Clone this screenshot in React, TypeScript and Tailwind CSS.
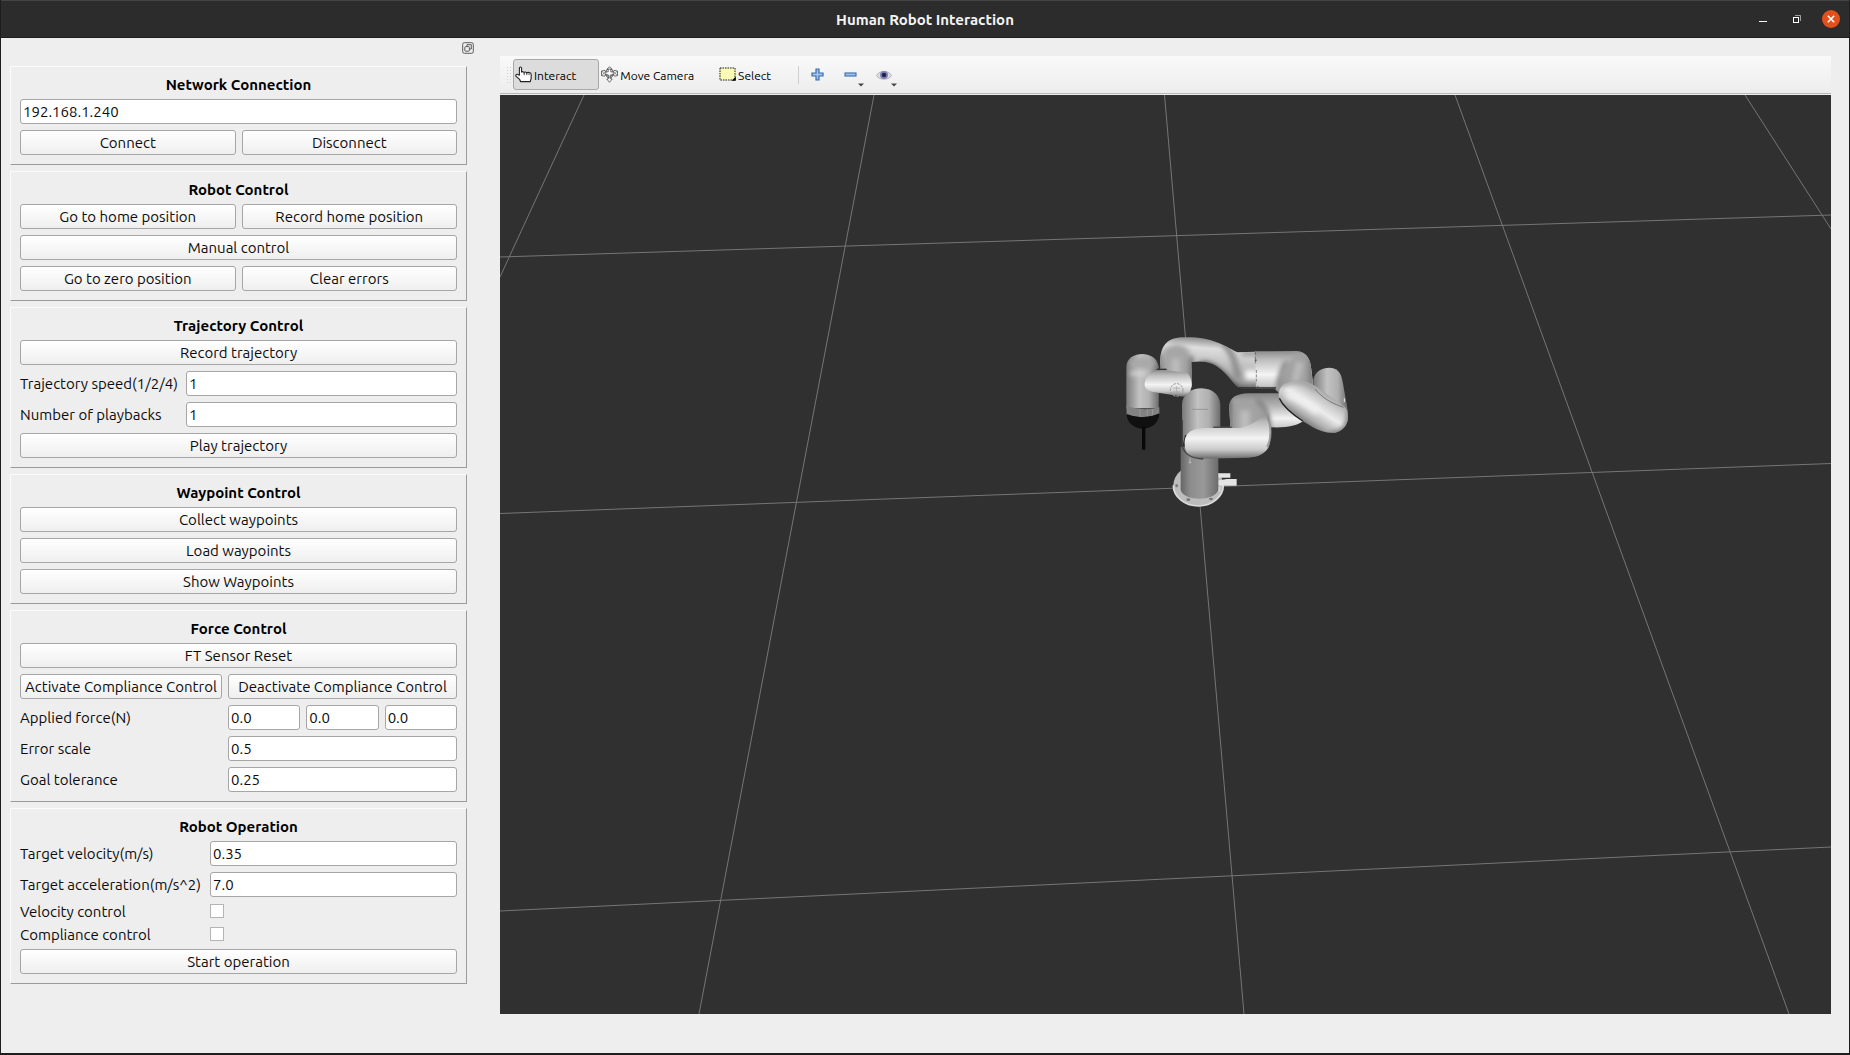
import { useState, type ReactNode } from "react";
import clsx from "clsx";

function Panel({ title, children }: { title: string; children: ReactNode }) {
  return (
    <section className="flex flex-col gap-1.5 border border-t-[#fbfbfb] border-r-[#9b9b9b] border-b-[#9b9b9b] border-l-[#fbfbfb] px-[9px] pt-[9px] pb-[9px]">
      <h2 className="h-[17px] text-center text-[15px] leading-[18px] font-bold text-black">{title}</h2>
      {children}
    </section>
  );
}

function PushButton({ children }: { children: ReactNode }) {
  return (
    <button
      type="button"
      className="h-[25px] w-full rounded-[3px] border border-[#a6a6a6] bg-linear-to-b from-white to-[#efefef] text-center leading-[22px] whitespace-nowrap active:from-[#dcdcdc] active:to-[#dcdcdc]"
    >
      {children}
    </button>
  );
}

function LineEdit({ id, label, initial }: { id: string; label?: string; initial: string }) {
  const [value, setValue] = useState(initial);
  return (
    <input
      id={id}
      type="text"
      aria-label={label}
      value={value}
      onChange={(e) => setValue(e.target.value)}
      className="h-[25px] w-full min-w-0 rounded-[3px] border border-[#a6a6a6] bg-white px-0.5 leading-[22px] outline-none focus:border-[#308cc6]"
    />
  );
}

function CheckRow({ id, label }: { id: string; label: string }) {
  return (
    <>
      <label htmlFor={id} className="h-[17px] leading-[17px]">{label}</label>
      <input
        id={id}
        type="checkbox"
        className="mt-px h-3.5 w-3.5 appearance-none self-start border border-[#b4b4b4] bg-white checked:bg-[#308cc6]"
      />
    </>
  );
}

function ControlDock() {
  return (
    <aside className="w-[475px] shrink-0 pr-[9px] pb-8 pl-[9px] text-[15px] leading-[25px] text-[#0c0c0c]">
      <div className="flex h-7 justify-end pt-1">
        <button type="button" aria-label="Float panel" className="mr-[-7px] h-3 w-3">
          <svg viewBox="0 0 12 12" className="h-3 w-3" fill="none" stroke="#5c5c5c">
            <rect x=".7" y=".7" width="10.6" height="10.6" rx="1.6" />
            <path d="M5 4.5V2.7h4.3V7H7.6" />
            <rect x="2.8" y="4.6" width="4.6" height="4.6" rx=".8" />
          </svg>
        </button>
      </div>

      <div className="flex flex-col gap-1.5">
        <Panel title="Network Connection">
          <LineEdit id="ip" label="Robot IP address" initial="192.168.1.240" />
          <div className="grid grid-cols-2 gap-1.5">
            <PushButton>Connect</PushButton>
            <PushButton>Disconnect</PushButton>
          </div>
        </Panel>

        <Panel title="Robot Control">
          <div className="grid grid-cols-2 gap-1.5">
            <PushButton>Go to home position</PushButton>
            <PushButton>Record home position</PushButton>
          </div>
          <PushButton>Manual control</PushButton>
          <div className="grid grid-cols-2 gap-1.5">
            <PushButton>Go to zero position</PushButton>
            <PushButton>Clear errors</PushButton>
          </div>
        </Panel>

        <Panel title="Trajectory Control">
          <PushButton>Record trajectory</PushButton>
          <div className="grid grid-cols-[160px_1fr] gap-1.5">
            <label htmlFor="speed" className="whitespace-nowrap">Trajectory speed(1/2/4)</label>
            <LineEdit id="speed" initial="1" />
            <label htmlFor="playbacks">Number of playbacks</label>
            <LineEdit id="playbacks" initial="1" />
          </div>
          <PushButton>Play trajectory</PushButton>
        </Panel>

        <Panel title="Waypoint Control">
          <PushButton>Collect waypoints</PushButton>
          <PushButton>Load waypoints</PushButton>
          <PushButton>Show Waypoints</PushButton>
        </Panel>

        <Panel title="Force Control">
          <PushButton>FT Sensor Reset</PushButton>
          <div className="grid grid-cols-[202px_1fr] gap-1.5">
            <PushButton>Activate Compliance Control</PushButton>
            <PushButton>Deactivate Compliance Control</PushButton>
            <label htmlFor="force-x">Applied force(N)</label>
            <div className="grid grid-cols-3 gap-1.5">
              <LineEdit id="force-x" initial="0.0" />
              <LineEdit id="force-y" label="Applied force Y" initial="0.0" />
              <LineEdit id="force-z" label="Applied force Z" initial="0.0" />
            </div>
            <label htmlFor="error-scale">Error scale</label>
            <LineEdit id="error-scale" initial="0.5" />
            <label htmlFor="tolerance">Goal tolerance</label>
            <LineEdit id="tolerance" initial="0.25" />
          </div>
        </Panel>

        <Panel title="Robot Operation">
          <div className="grid grid-cols-[184px_1fr] gap-1.5">
            <label htmlFor="velocity">Target velocity(m/s)</label>
            <LineEdit id="velocity" initial="0.35" />
            <label htmlFor="acceleration" className="whitespace-nowrap">Target acceleration(m/s^2)</label>
            <LineEdit id="acceleration" initial="7.0" />
            <CheckRow id="velocity-control" label="Velocity control" />
            <CheckRow id="compliance-control" label="Compliance control" />
          </div>
          <PushButton>Start operation</PushButton>
        </Panel>
      </div>
    </aside>
  );
}

function HandIcon() {
  return (
    <svg viewBox="0 0 17 17" className="h-[17px] w-[17px] shrink-0" fill="#fff" stroke="#222" strokeWidth="1.1">
      <path d="M4.4 9.6V2.2C4.4.6 6.6.6 6.6 2.2V6.4C6.8 5.4 9 5.4 9.2 6.6 9.6 5.8 11.4 5.8 11.8 7 12.4 6.2 16.2 5.8 16.2 8.6V12.2L15.2 15.6H5.6L4.6 13.4.9 10.2C.4 8.8 2 7.8 3 8.4L4.4 9.6" />
      <path d="M9.2 6.8V9.2M11.8 7.2V9.2M14 7.2V9.2" strokeWidth=".8" />
    </svg>
  );
}

function MoveIcon() {
  return (
    <svg viewBox="0 0 17 17" className="h-[17px] w-[17px] shrink-0" fill="#fafafa" stroke="#4a4a4a" strokeWidth=".8">
      <path d="M8.5.7 11.2 3.4H9.8V5.8H12.6L13 4.4 16.5 5 16.5 9.6 13.4 10.2 12.6 8.8H9.8V13H11.2L8.5 16.3 5.8 13H7.2V8.8H4.4L3.6 10.2.5 9.6.5 5 4 4.4 4.4 5.8H7.2V3.4H5.8Z" />
      <path d="M.6 5 4.4 8.8M.6 9.6 4.4 5.8M16.4 5 12.6 8.8M16.4 9.6 12.6 5.8" fill="none" strokeWidth=".6" />
      <ellipse cx="8.5" cy="7.4" rx="3.8" ry="4.4" fill="none" />
      <path d="M4.8 8.5C6.6 10.6 10.4 10.6 12.2 8.5" fill="none" />
    </svg>
  );
}

function SelectIcon() {
  return (
    <svg viewBox="0 0 17 17" className="h-[17px] w-[17px] shrink-0">
      <rect x="1" y="2" width="15" height="12" fill="#fcfbb5" stroke="#222" strokeDasharray="1.6 .9" />
      <path d="M16.8 10.4V14.8H12.6Z" fill="#000" />
    </svg>
  );
}

function DropArrow() {
  return (
    <svg viewBox="0 0 6 4" className="absolute right-0 bottom-[3px] h-1 w-1.5">
      <path d="M0 .5H6L3 3.5Z" fill="#444" />
    </svg>
  );
}

const tools = [
  { name: "Interact", icon: <HandIcon /> },
  { name: "Move Camera", icon: <MoveIcon /> },
  { name: "Select", icon: <SelectIcon /> },
];

function Toolbar() {
  const [active, setActive] = useState("Interact");
  return (
    <div role="toolbar" className="mb-px flex h-[38px] items-center border-b border-[#b8b8b8] bg-linear-to-b from-[#f9f9f9] to-[#ededed] pl-[5px]">
      <svg viewBox="0 0 6 16" className="h-4 w-2" stroke="#cfcfcf" strokeDasharray="1 2">
        <path d="M1.5 0V16M4.5 0V16" />
      </svg>
      {tools.map((t) => (
        <button
          key={t.name}
          type="button"
          aria-pressed={active === t.name}
          onClick={() => setActive(t.name)}
          className={clsx(
            "flex h-[31px] items-center gap-0.5 rounded-[3px] border pr-[22px] pl-px text-[12px] leading-4 text-black",
            active === t.name ? "border-[#a8a8a8] bg-[#dcdcdc]" : "border-transparent",
          )}
        >
          {t.icon}
          <span className="pt-0.5 whitespace-nowrap">{t.name}</span>
        </button>
      ))}
      <div className="ml-1 h-[18px] w-px bg-[#cfcfcf]" />
      <button type="button" aria-label="Add tool" className="ml-3 flex h-[31px] w-[13px] items-center">
        <svg viewBox="0 0 13 13" className="h-[13px] w-[13px]">
          <path d="M5 1H8V5H12V8H8V12H5V8H1V5H5Z" fill="#9fc3ea" stroke="#3a6cab" strokeWidth="1.2" />
        </svg>
      </button>
      <button type="button" aria-label="Remove tool" className="relative ml-5 flex h-[31px] w-5 items-center">
        <svg viewBox="0 0 13 13" className="h-[13px] w-[13px]">
          <rect x="1" y="5" width="11" height="3" fill="#9fc3ea" stroke="#3a6cab" strokeWidth="1.1" />
        </svg>
        <DropArrow />
      </button>
      <button type="button" aria-label="View options" className="relative ml-3 flex h-[31px] w-[21px] items-center">
        <svg viewBox="0 0 16 12" className="h-3 w-4">
          <path d="M.5 6.5C3 1 13 1 15.5 6.5 13 11.5 3 11.5.5 6.5Z" fill="#dcdce2" stroke="#a9a9b0" strokeWidth=".8" />
          <circle cx="8" cy="6" r="4" fill="#8183b4" />
          <circle cx="8" cy="6" r="2.3" fill="#23234f" />
        </svg>
        <DropArrow />
      </button>
    </div>
  );
}

// xArm in its rest pose, painted back to front
function RobotArm() {
  return (
    <g transform="translate(600 225) scale(.33333)">
      <defs>
        <linearGradient id="column">
          <stop offset="0" stopColor="#666" />
          <stop offset=".25" stopColor="#8c8c8c" />
          <stop offset=".6" stopColor="#999" />
          <stop offset="1" stopColor="#6c6c6c" />
        </linearGradient>
        <linearGradient id="upright">
          <stop offset="0" stopColor="#7a7a7a" />
          <stop offset=".4" stopColor="#c2c2c2" />
          <stop offset=".7" stopColor="#b0b0b0" />
          <stop offset="1" stopColor="#6c6c6c" />
        </linearGradient>
        <linearGradient id="barrel" x2="0" y2="1">
          <stop offset="0" stopColor="#8c8c8c" />
          <stop offset=".2" stopColor="#bdbdbd" />
          <stop offset=".55" stopColor="#f4f4f4" />
          <stop offset=".8" stopColor="#cacaca" />
          <stop offset="1" stopColor="#6c6c6c" />
        </linearGradient>
        {/* runs across the forearm, which points down and right */}
        <linearGradient id="forearm" gradientUnits="userSpaceOnUse" x1="690" y1="215" x2="620" y2="322">
          <stop offset="0" stopColor="#9a9a9a" />
          <stop offset=".25" stopColor="#c8c8c8" />
          <stop offset=".5" stopColor="#ececec" />
          <stop offset=".78" stopColor="#b0b0b0" />
          <stop offset="1" stopColor="#666" />
        </linearGradient>
        <linearGradient id="arch" x1=".3" y1="0" x2=".15" y2="1">
          <stop offset="0" stopColor="#8e8e8e" />
          <stop offset=".18" stopColor="#dedede" />
          <stop offset=".45" stopColor="#c2c2c2" />
          <stop offset="1" stopColor="#808080" />
        </linearGradient>
        <linearGradient id="lowerBend" x2="0" y2="1">
          <stop offset="0" stopColor="#858585" />
          <stop offset=".3" stopColor="#b4b4b4" />
          <stop offset=".6" stopColor="#f2f2f2" />
          <stop offset="1" stopColor="#a8a8a8" />
        </linearGradient>
        <filter id="soft" filterUnits="userSpaceOnUse" x="0" y="0" width="810" height="600">
          <feGaussianBlur stdDeviation="8" />
        </filter>
        <clipPath id="archClip">
          <path d="M181 140C177 80 200 54 245 52C330 48 365 72 412 97L470 95V207H425C400 198 390 165 350 138C325 122 300 124 274 126L276 200H180Z" />
        </clipPath>
        <clipPath id="elbowClip">
          <path d="M465 94 590 93C620 95 632 118 634 150L640 200 540 222 525 207H468Z" />
        </clipPath>
        <clipPath id="lowerClip">
          <path d="M388 262C388 232 410 221 445 220H545L608 304C590 318 560 324 512 322V345H392Z" />
        </clipPath>
        <clipPath id="forearmClip">
          <path d="M536 225C535 195 565 182 600 184C640 186 655 205 735 262C752 280 748 330 705 338C660 342 620 310 590 290C560 270 538 250 536 225Z" />
        </clipPath>
        <clipPath id="wristClip">
          <path d="M79 145C78 112 105 102 128 102C160 104 176 120 177 150L176 265H79Z" />
        </clipPath>
      </defs>

      {/* base flange and cable ports */}
      <ellipse cx="295" cy="496" rx="75" ry="62" fill="#bdbdbd" />
      <path d="M220 496A75 62 0 0 0 370 496" fill="none" stroke="#dcdcdc" strokeWidth="5" />
      <path d="M354 460H391V473H354ZM350 482 380 477H410V497H362L350 492Z" fill="#e4e4e4" />
      <path d="M345 500H362V515H345Z" fill="#d2d2d2" />
      <path d="M242 380H355V510C345 545 250 545 242 510Z" fill="url(#column)" />
      <g fill="#777">
        <ellipse cx="230" cy="497" rx="4" ry="5" />
        <ellipse cx="265" cy="539" rx="6" ry="4" />
        <ellipse cx="333" cy="537" rx="6" ry="4" />
      </g>
      <path d="M270 415V431M266 427H274" stroke="#ccc" strokeWidth="2" />

      {/* far link on the right */}
      <path d="M640 190C638 160 660 143 690 143C718 145 724 165 728 185L744 275 700 275 645 220Z" fill="url(#upright)" />

      {/* lower bend */}
      <path d="M388 262C388 232 410 221 445 220H545L608 304C590 318 560 324 512 322V345H392Z" fill="url(#lowerBend)" />
      <g clipPath="url(#lowerClip)">
        <path d="M384 240H455C490 245 505 270 508 350H384Z" fill="#a2a2a2" filter="url(#soft)" />
        <path d="M420 270H450V350H420Z" fill="#bcbcbc" filter="url(#soft)" />
        <path d="M470 240C500 260 505 290 506 330" stroke="#808080" strokeWidth="14" fill="none" filter="url(#soft)" />
        <path d="M380 240H392V345H380Z" fill="#4d4d4d" filter="url(#soft)" />
      </g>

      {/* arch from the wrist to the elbow */}
      <path d="M181 140C177 80 200 54 245 52C330 48 365 72 412 97L470 95V207H425C400 198 390 165 350 138C325 122 300 124 274 126L276 200H180Z" fill="url(#arch)" />
      <g clipPath="url(#archClip)">
        <path d="M190 90C210 72 250 62 268 95 276 120 276 160 276 205H190Z" fill="#a6a6a6" filter="url(#soft)" />
        <path d="M215 115H240V180H215Z" fill="#bcbcbc" filter="url(#soft)" />
        <path d="M181 100V200" stroke="#5c5c5c" strokeWidth="8" filter="url(#soft)" />
        <path d="M274 110V200" stroke="#606060" strokeWidth="10" filter="url(#soft)" />
        <path d="M300 134C360 124 385 204 430 216" stroke="#444" strokeWidth="18" fill="none" filter="url(#soft)" />
        <path d="M370 72C400 95 405 130 415 175" stroke="#8a8a8a" strokeWidth="18" fill="none" filter="url(#soft)" />
        <path d="M435 165H490" stroke="#f8f8f8" strokeWidth="30" filter="url(#soft)" />
        <path d="M425 100H480" stroke="#8a8a8a" strokeWidth="12" filter="url(#soft)" />
        <path d="M420 207H480" stroke="#555" strokeWidth="12" filter="url(#soft)" />
      </g>

      {/* elbow */}
      <path d="M465 94 590 93C620 95 632 118 634 150L640 200 540 222 525 207H468Z" fill="url(#barrel)" />
      <g clipPath="url(#elbowClip)">
        <path d="M590 100C560 125 542 160 532 215H650V100Z" fill="#a0a0a0" filter="url(#soft)" />
        <path d="M560 125C545 145 538 175 534 205" stroke="#787878" strokeWidth="12" fill="none" filter="url(#soft)" />
        <path d="M600 125 585 185" stroke="#bababa" strokeWidth="24" filter="url(#soft)" />
        <path d="M634 110V200" stroke="#5e5e5e" strokeWidth="8" filter="url(#soft)" />
      </g>
      <path d="M416 204H528" stroke="#2b2b2b" strokeWidth="5" />
      <path d="M466 96V130M469 150V190M470 198 484 206" stroke="#555" strokeWidth="2" strokeDasharray="9 4" />
      <circle cx="467" cy="121" r="3" fill="#555" />

      {/* forearm */}
      <path d="M536 225C535 195 565 182 600 184C640 186 655 205 735 262C752 280 748 330 705 338C660 342 620 310 590 290C560 270 538 250 536 225Z" fill="url(#forearm)" />
      <g clipPath="url(#forearmClip)">
        <path d="M540 200C570 170 620 180 650 205" stroke="#a4a4a4" strokeWidth="20" fill="none" filter="url(#soft)" />
        <path d="M560 222C590 232 620 250 655 275" stroke="#f0f0f0" strokeWidth="22" fill="none" filter="url(#soft)" />
        <path d="M748 270C752 310 730 345 690 342" stroke="#707070" strokeWidth="14" fill="none" filter="url(#soft)" />
      </g>
      <path d="M538 235C550 262 580 285 608 303" stroke="#1c1c1c" strokeWidth="4" fill="none" />
      <path d="M645 208C680 245 700 250 730 262" stroke="#555" strokeWidth="2" fill="none" />
      <path d="M733 235V246" stroke="#eee" strokeWidth="3" />

      {/* shoulder: upright, then the horizontal barrel */}
      <path d="M246 255C246 222 275 205 305 205C338 206 360 225 361 255V345H255L247 380Z" fill="url(#upright)" />
      <path d="M277 268H325" stroke="#858585" strokeWidth="2" />
      <path d="M340 322H395" stroke="#4c4c4c" strokeWidth="5" />
      <path d="M254 370C254 335 280 324 320 324H420C450 320 490 290 505 280C515 310 515 350 508 375C500 400 475 412 445 413L300 416C268 414 254 400 254 370Z" fill="url(#barrel)" />
      <path d="M503 290C514 320 514 355 502 382" stroke="#888" strokeWidth="7" fill="none" opacity=".7" />
      <path d="M247 300V380C255 405 275 416 310 417" stroke="#444" strokeWidth="4" fill="none" />

      {/* wrist, sensor ring and tool */}
      <path d="M79 145C78 112 105 102 128 102C160 104 176 120 177 150L176 265H79Z" fill="url(#upright)" />
      <g clipPath="url(#wristClip)">
        <ellipse cx="126" cy="130" rx="38" ry="16" fill="#a8a8a8" filter="url(#soft)" />
        <path d="M90 160H140" stroke="#d6d6d6" strokeWidth="12" filter="url(#soft)" />
      </g>
      <path d="M170 148H200" stroke="#333" strokeWidth="4" />
      <path d="M134 188C140 160 160 148 190 150L262 158C282 180 280 220 250 230L160 216C142 212 132 205 134 188Z" fill="url(#barrel)" />
      <circle cx="230" cy="210" r="19" fill="none" stroke="#999" strokeWidth="3" strokeDasharray="8 3" />
      <path d="M219 204H241M219 216H241M230 199V221" stroke="#a4a4a4" strokeWidth="2" />
      <path d="M79 258Q128 275 178 262V282Q128 300 80 284Z" fill="#828282" />
      <path d="M120 268V294M142 268V293M158 267V290" stroke="#999" strokeWidth="3" />
      <path d="M80 282Q128 302 178 280C178 308 155 326 130 326S80 310 80 282Z" fill="#101010" />
      <path d="M131 320V389" stroke="#080808" strokeWidth="10" />
    </g>
  );
}

function Viewport() {
  return (
    <svg
      role="img"
      aria-label="3D view of the robot"
      viewBox="0 0 1331 919"
      preserveAspectRatio="xMidYMid slice"
      className="min-h-0 w-full flex-1 bg-[#303030]"
    >
      <path
        d="M84 0 0 182M374 0 199 919M664.5 0 744 919M955 0 1289 919M1245 0 1331 134M0 162 1331 120M0 418.5 1331 368.5M0 816 1331 752"
        fill="none"
        stroke="#757575"
        strokeWidth="1"
      />
      <RobotArm />
    </svg>
  );
}

function TitleBar() {
  return (
    <header className="flex h-[38px] shrink-0 items-center border-t border-b border-t-[#444] border-b-[#1c1c1c] bg-[#2c2c2c]">
      <div className="w-[103px]" />
      <h1 className="flex-1 pt-0.5 text-center text-[15px] font-bold text-[#f4f4f4]">Human Robot Interaction</h1>
      <div className="flex w-[103px] justify-end pr-px text-white">
        <button type="button" aria-label="Minimize" className="flex w-[34px] items-center justify-center">
          <svg viewBox="0 0 18 18" className="h-[18px] w-[18px]"><path d="M5 11.5H13" stroke="currentColor" /></svg>
        </button>
        <button type="button" aria-label="Restore" className="flex w-[34px] items-center justify-center">
          <svg viewBox="0 0 18 18" className="h-[18px] w-[18px]" fill="none" stroke="currentColor">
            <rect x="5.5" y="7.5" width="5" height="5" />
            <path d="M7 5.5H12.5V11" opacity=".55" />
          </svg>
        </button>
        <button type="button" aria-label="Close" className="flex w-[34px] items-center justify-center">
          <svg viewBox="0 0 18 18" className="h-[18px] w-[18px]">
            <circle cx="9" cy="9" r="9" fill="#e2501b" />
            <path d="M5.8 5.8 12.2 12.2M12.2 5.8 5.8 12.2" stroke="#fff" strokeWidth="1.6" />
          </svg>
        </button>
      </div>
    </header>
  );
}

export default function App() {
  return (
    <div className="flex min-h-screen flex-col border-x border-b-2 border-[#1e1e1e] bg-[#eeeeee] font-['Ubuntu','Noto_Sans',sans-serif]">
      <TitleBar />
      <div className="flex flex-1">
        <ControlDock />
        <main className="flex min-w-0 flex-1 flex-col pt-[18px] pr-[18px] pb-[39px] pl-6">
          <Toolbar />
          <Viewport />
        </main>
      </div>
    </div>
  );
}
